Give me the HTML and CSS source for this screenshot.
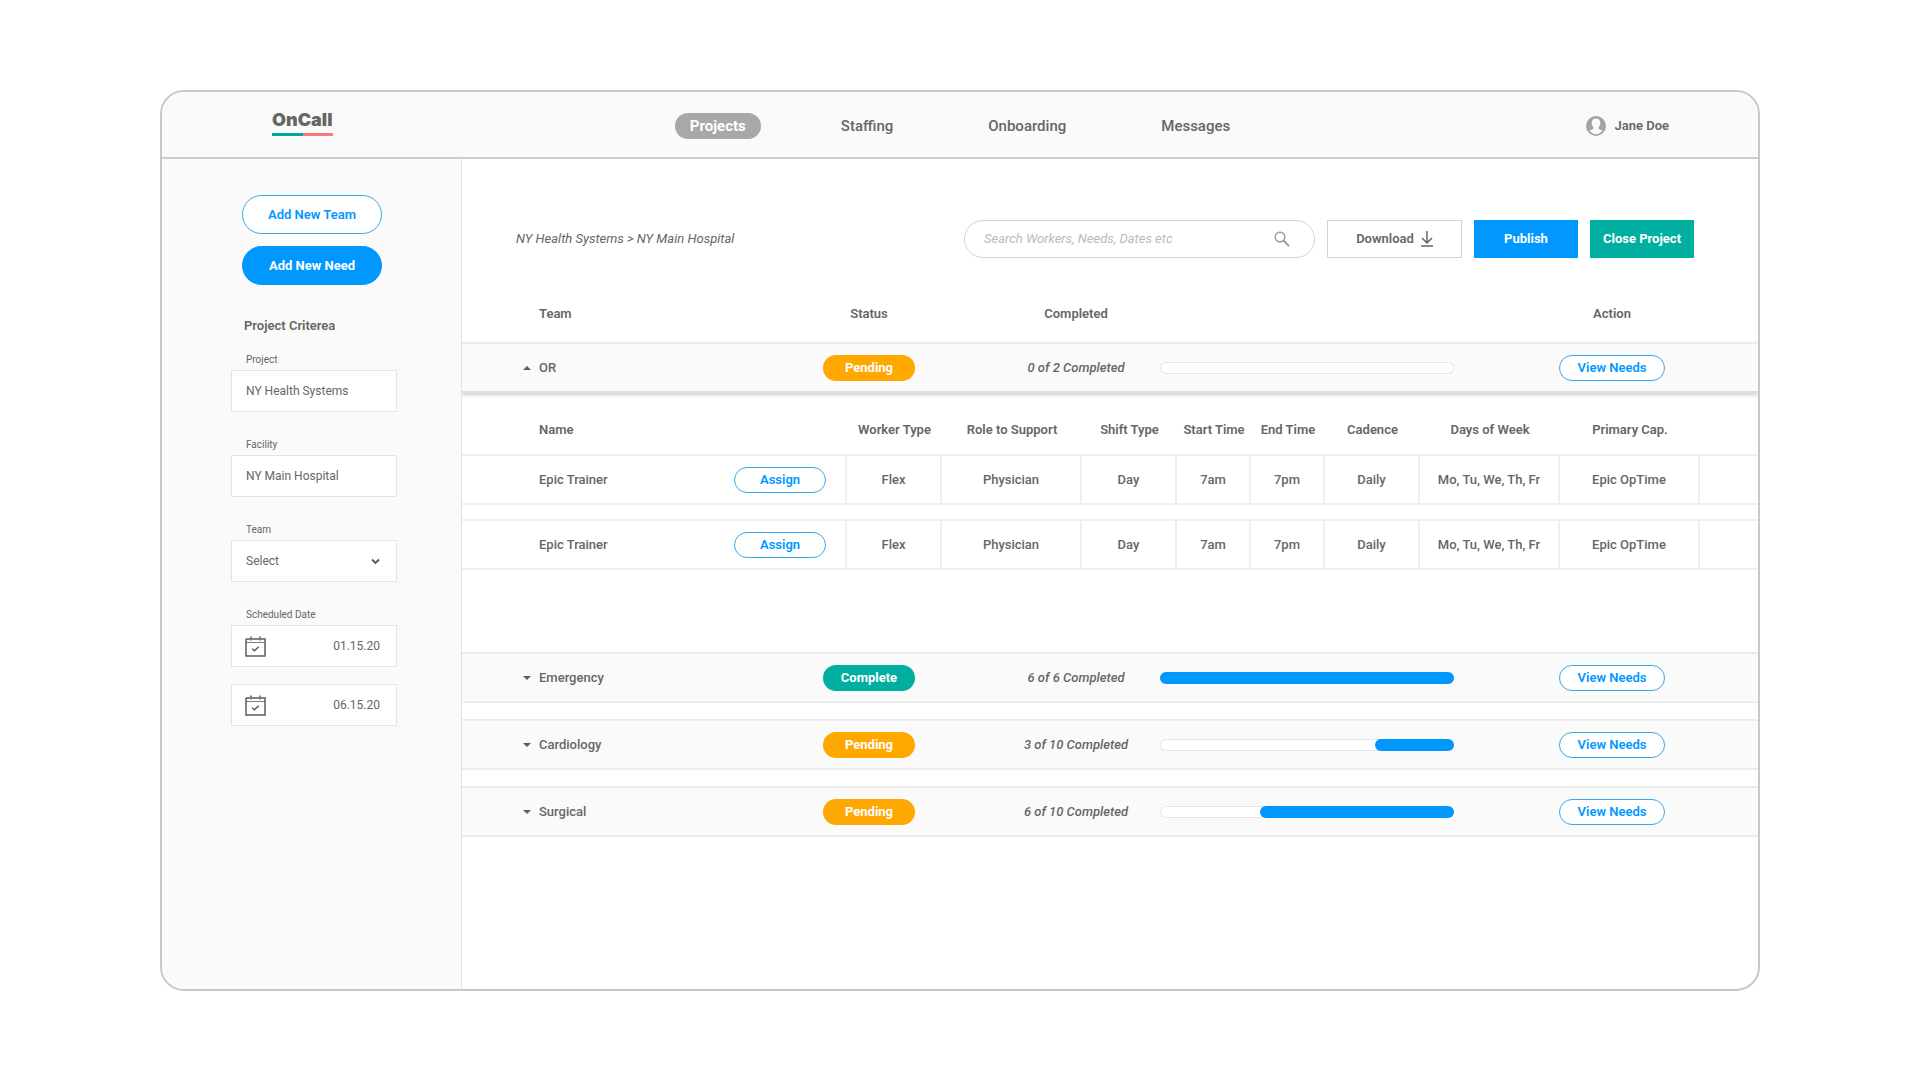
FILE: index.html
```
<!DOCTYPE html>
<html lang="en">
<head>
    <meta charset="UTF-8">
    <meta name="viewport" content="width=device-width, initial-scale=1.0">
    <title>OnCall - Projects</title>
    <link rel="stylesheet" href="styles.css">
</head>
<body>
    <!-- Shared icons -->
    <svg class="sprite" width="0" height="0" aria-hidden="true">
        <symbol id="icon-calendar" viewBox="0 0 21 21">
            <g fill="none" stroke="#5c5c5c">
                <path d="M1 3H5.500M7 3H14M15.500 3H20V20H1V3" stroke-width="1.500"/>
                <path d="M1 6.500H20" stroke-width="0.800"/>
                <path d="M6 0.500V4.500M15 0.500V4.500" stroke-width="1.500"/>
                <path d="M7.200 12.700L9.500 14.800L13.700 10.700" stroke-width="1.500"/>
            </g>
        </symbol>
        <symbol id="icon-down" viewBox="0 0 8 4"><path d="M0 0H8L4 4Z" fill="#5c5c5c"/></symbol>
        <symbol id="icon-up" viewBox="0 0 8 4"><path d="M0 4H8L4 0Z" fill="#5c5c5c"/></symbol>
    </svg>

    <div class="app">
        <header class="topbar">
            <a class="logo" href="#">OnCall</a>
            <nav class="nav">
                <a class="active" href="#">Projects</a>
                <a href="#">Staffing</a>
                <a href="#">Onboarding</a>
                <a href="#">Messages</a>
            </nav>
            <a class="user" href="#">
                <svg width="20" height="20" viewBox="0 0 20 20" aria-hidden="true">
                    <circle cx="10" cy="10" r="10" fill="#a3a3a3"/>
                    <path d="M10 2.600C7.200 2.600 5.600 4.500 5.700 7.200C5.800 9.100 6.500 10.200 7.300 11C7.700 12.600 7.200 13.300 3.400 14.600C5 16.900 7.300 18.300 10 18.300S15 16.900 16.600 14.600C12.800 13.300 12.300 12.600 12.700 11C13.500 10.200 14.200 9.100 14.300 7.200C14.400 4.500 12.800 2.600 10 2.600Z" fill="#fafafa"/>
                </svg>
                Jane Doe
            </a>
        </header>

        <div class="body">
            <aside class="sidebar">
                <div class="sidebar-actions">
                    <button class="btn-round">Add New Team</button>
                    <button class="btn-round filled">Add New Need</button>
                </div>

                <h2>Project Criterea</h2>

                <div class="field">
                    <label for="project">Project</label>
                    <div class="box"><input type="text" id="project" value="NY Health Systems"></div>
                </div>
                <div class="field">
                    <label for="facility">Facility</label>
                    <div class="box"><input type="text" id="facility" value="NY Main Hospital"></div>
                </div>
                <div class="field">
                    <label for="team">Team</label>
                    <div class="box">
                        <select id="team">
                            <option>Select</option>
                            <option>OR</option>
                            <option>Emergency</option>
                            <option>Cardiology</option>
                            <option>Surgical</option>
                        </select>
                        <svg width="9" height="7" viewBox="0 0 9 7" aria-hidden="true"><path d="M1 1.500L4.500 5L8 1.500" fill="none" stroke="#555" stroke-width="1.800"/></svg>
                    </div>
                </div>
                <div class="field">
                    <label for="dateFrom">Scheduled Date</label>
                    <div class="box date">
                        <svg width="21" height="21" aria-hidden="true"><use href="#icon-calendar"/></svg>
                        <input type="text" id="dateFrom" value="01.15.20">
                    </div>
                    <div class="box date">
                        <svg width="21" height="21" aria-hidden="true"><use href="#icon-calendar"/></svg>
                        <input type="text" id="dateTo" value="06.15.20" aria-label="Scheduled end date">
                    </div>
                </div>
            </aside>

            <main class="main">
                <div class="toolbar">
                    <div class="breadcrumb">NY Health Systems &gt; NY Main Hospital</div>
                    <div class="search">
                        <input type="text" placeholder="Search Workers, Needs, Dates etc" aria-label="Search">
                        <svg width="16" height="16" viewBox="0 0 16 16" aria-hidden="true"><circle cx="6" cy="6" r="4.800" fill="none" stroke="#999" stroke-width="1.500"/><path d="M9.500 9.500L15 15" stroke="#999" stroke-width="1.800"/></svg>
                    </div>
                    <button class="btn download">
                        Download
                        <svg width="12" height="16" viewBox="0 0 12 16" aria-hidden="true"><path d="M6 0V12M1 7L6 12L11 7M0 15H12" fill="none" stroke="#666" stroke-width="1.500"/></svg>
                    </button>
                    <button class="btn publish">Publish</button>
                    <button class="btn close">Close Project</button>
                </div>

                <table class="teams">
                    <colgroup>
                        <col class="col-team">
                        <col class="col-status">
                        <col class="col-completed">
                        <col>
                        <col class="col-action">
                    </colgroup>
                    <thead>
                        <tr>
                            <th class="first">Team</th>
                            <th>Status</th>
                            <th>Completed</th>
                            <th></th>
                            <th>Action</th>
                        </tr>
                    </thead>
                    <tbody>
                        <tr class="team open">
                            <td class="first"><button class="toggle"><svg width="8" height="4" aria-hidden="true"><use href="#icon-up"/></svg>OR</button></td>
                            <td><span class="status">Pending</span></td>
                            <td class="count">0 of 2 Completed</td>
                            <td><div class="bar"></div></td>
                            <td><button class="pill view">View Needs</button></td>
                        </tr>
                        <tr>
                            <td class="nested" colspan="5">
                                <table class="workers">
                                    <colgroup>
                                        <col>
                                        <col class="col-m">
                                        <col class="col-l">
                                        <col class="col-m">
                                        <col class="col-s">
                                        <col class="col-s">
                                        <col class="col-m">
                                        <col class="col-l">
                                        <col class="col-l">
                                        <col class="col-end">
                                    </colgroup>
                                    <thead>
                                        <tr>
                                            <th class="first">Name</th>
                                            <th>Worker Type</th>
                                            <th>Role to Support</th>
                                            <th>Shift Type</th>
                                            <th>Start Time</th>
                                            <th>End Time</th>
                                            <th>Cadence</th>
                                            <th>Days of Week</th>
                                            <th>Primary Cap.</th>
                                            <th></th>
                                        </tr>
                                    </thead>
                                    <tbody>
                                        <tr class="worker">
                                            <td class="first"><div class="name">Epic Trainer <button class="pill">Assign</button></div></td>
                                            <td>Flex</td>
                                            <td>Physician</td>
                                            <td>Day</td>
                                            <td>7am</td>
                                            <td>7pm</td>
                                            <td>Daily</td>
                                            <td>Mo, Tu, We, Th, Fr</td>
                                            <td>Epic OpTime</td>
                                            <td></td>
                                        </tr>
                                        <tr class="spacer"><td colspan="10"></td></tr>
                                        <tr class="worker">
                                            <td class="first"><div class="name">Epic Trainer <button class="pill">Assign</button></div></td>
                                            <td>Flex</td>
                                            <td>Physician</td>
                                            <td>Day</td>
                                            <td>7am</td>
                                            <td>7pm</td>
                                            <td>Daily</td>
                                            <td>Mo, Tu, We, Th, Fr</td>
                                            <td>Epic OpTime</td>
                                            <td></td>
                                        </tr>
                                    </tbody>
                                </table>
                            </td>
                        </tr>
                        <tr class="team">
                            <td class="first"><button class="toggle"><svg width="8" height="4" aria-hidden="true"><use href="#icon-down"/></svg>Emergency</button></td>
                            <td><span class="status complete">Complete</span></td>
                            <td class="count">6 of 6 Completed</td>
                            <td><div class="bar"><div class="fill" style="width: 100%"></div></div></td>
                            <td><button class="pill view">View Needs</button></td>
                        </tr>
                        <tr class="spacer team-spacer"><td colspan="5"></td></tr>
                        <tr class="team">
                            <td class="first"><button class="toggle"><svg width="8" height="4" aria-hidden="true"><use href="#icon-down"/></svg>Cardiology</button></td>
                            <td><span class="status">Pending</span></td>
                            <td class="count">3 of 10 Completed</td>
                            <td><div class="bar"><div class="fill" style="width: 27%"></div></div></td>
                            <td><button class="pill view">View Needs</button></td>
                        </tr>
                        <tr class="spacer team-spacer"><td colspan="5"></td></tr>
                        <tr class="team">
                            <td class="first"><button class="toggle"><svg width="8" height="4" aria-hidden="true"><use href="#icon-down"/></svg>Surgical</button></td>
                            <td><span class="status">Pending</span></td>
                            <td class="count">6 of 10 Completed</td>
                            <td><div class="bar"><div class="fill" style="width: 66%"></div></div></td>
                            <td><button class="pill view">View Needs</button></td>
                        </tr>
                    </tbody>
                </table>
            </main>
        </div>
    </div>
</body>
</html>
```
FILE: styles.css
```
* { box-sizing: border-box; }
body {
    margin: 0;
    min-height: 100vh;
    padding: 90px 160px 89px;
    display: flex;
    background-color: #fff;
    color: #666;
    font-family: Roboto, "Liberation Sans", sans-serif;
    font-size: 13px;
    font-weight: 500;
    line-height: 20px;
}
a { color: inherit; text-decoration: none; }
button, input, select { font: inherit; color: inherit; }
button { cursor: pointer; padding: 0; }
.sprite { position: absolute; }

.app {
    flex: 1;
    min-width: 0;
    display: flex;
    flex-direction: column;
    border: 2px solid #c8c8c8;
    border-radius: 24px;
    overflow: hidden;
}

/* Top bar */
.topbar {
    display: grid;
    grid-template-columns: 1fr auto 1fr;
    align-items: center;
    padding: 18px 89px 15px;
    background-color: #fafafa;
    border-bottom: 2px solid #cdcdcd;
}
.logo {
    justify-self: start;
    margin: 0 0 6px 21px;
    font-family: Inter, sans-serif;
    font-size: 18px;
    font-weight: 900;
    line-height: 20px;
    padding-bottom: 3px;
    border-bottom: 3px solid;
    border-image: linear-gradient(to right, #00a99b 50%, #f47c7c 50%) 1;
}
.nav { display: flex; gap: 65px; font-size: 15px; }
.nav a { padding: 3px 15px; border-radius: 13px; }
.nav .active { background-color: #a8a8a8; color: #fff; font-weight: 700; }
.user { justify-self: end; display: flex; align-items: center; gap: 8px; font-weight: 600; }

.body { flex: 1; display: flex; }

/* Sidebar */
.sidebar {
    flex: none;
    width: 300px;
    padding: 36px 64px 36px 69px;
    background-color: #fafafa;
    border-right: 1px solid #e2e2e2;
}
.sidebar-actions { display: flex; flex-direction: column; gap: 12px; width: 140px; margin-left: 11px; }
.btn-round {
    height: 39px;
    border: 1px solid #3ba7e8;
    border-radius: 20px;
    background-color: #fff;
    color: #0098ff;
    font-weight: 600;
}
.btn-round.filled { background-color: #0098ff; border-color: #0098ff; color: #fff; font-weight: 700; }
.sidebar h2 { margin: 31px 0 14px 13px; font-size: 13px; font-weight: 600; line-height: 20px; }
.field { margin-bottom: 23px; font-weight: 400; }
.field label { display: block; padding-left: 15px; font-size: 10px; }
.box {
    display: flex;
    align-items: center;
    height: 42px;
    padding: 0 16px 0 14px;
    background-color: #fff;
    border: 1px solid #e4e4e4;
    font-size: 12px;
}
.box input, .box select {
    flex: 1;
    min-width: 0;
    padding: 0;
    border: 0;
    background: none;
    outline: none;
    appearance: none;
}
.date { padding-left: 13px; }
.date + .date { margin-top: 17px; }
.date input { text-align: right; }

/* Toolbar */
.main { flex: 1; min-width: 0; padding-top: 61px; overflow: hidden; }
.toolbar { display: flex; align-items: center; gap: 12px; padding: 0 64px 0 54px; margin-bottom: 28px; }
.breadcrumb { flex: 1; font-style: italic; font-weight: 400; }
.search {
    display: flex;
    align-items: center;
    width: 351px;
    height: 38px;
    padding: 0 24px 0 19px;
    border: 1px solid #d4d4d4;
    border-radius: 19px;
}
.search input { flex: 1; min-width: 0; padding: 0; border: 0; outline: none; background: none; font-style: italic; font-weight: 400; }
.search input::placeholder { color: #bbb; opacity: 1; }
.btn { width: 104px; height: 38px; border: 0; color: #fff; font-weight: 700; }
.btn.download {
    display: flex;
    align-items: center;
    justify-content: center;
    gap: 7px;
    width: 135px;
    border: 1px solid #d4d4d4;
    background-color: #fff;
    color: #666;
    font-weight: 600;
}
.btn.publish { background-color: #0098ff; }
.btn.close { background-color: #00af9f; }

/* Teams table */
table { width: 100%; table-layout: fixed; border-collapse: separate; border-spacing: 0; }
th, td { padding: 0; text-align: center; font-weight: 500; white-space: nowrap; }
th { font-weight: 600; }
th.first, td.first { text-align: left; padding-left: 77px; }
.col-team { width: 284px; }
.col-status { width: 246px; }
.col-completed { width: 168px; }
.col-action { width: 292px; }
.teams > thead th { height: 56px; }
.team > td {
    height: 51px;
    background-color: #fafafa;
    border-top: 2px solid #ececec;
    border-bottom: 2px solid #ececec;
}
.team > td.first { padding-left: 61px; }
.team.open { box-shadow: 0 2px 4px rgba(0,0,0,0.2); }
.team.open > td { border-bottom-color: #dedede; }
.toggle { display: flex; align-items: center; gap: 8px; border: 0; background: none; }
.status {
    display: block;
    width: 92px;
    margin: 0 auto;
    border-radius: 13px;
    line-height: 26px;
    background-color: #ffa800;
    color: #fff;
    font-weight: 700;
}
.status.complete { background-color: #00af9f; }
.count { font-style: italic; }
.bar {
    display: flex;
    justify-content: flex-end;
    height: 12px;
    margin-right: 12px;
    border-radius: 6px;
    background-color: #fff;
    box-shadow: inset 0 0 0 1px #e6e6e6;
}
.fill { border-radius: 6px; background-color: #0098ff; }
.pill {
    width: 92px;
    height: 26px;
    border: 1px solid #3ba7e8;
    border-radius: 13px;
    background-color: #fff;
    color: #0098ff;
    font-weight: 600;
}
.pill.view { width: 106px; }
.spacer td { height: 14px; }
.team-spacer td { height: 16px; }

/* Workers of an open team */
.nested { padding-bottom: 82px; }
.col-s { width: 74px; }
.col-m { width: 95px; }
.col-l { width: 140px; }
.col-end { width: 58px; }
.workers th { height: 61px; padding-top: 12px; }
.worker td {
    height: 51px;
    border: 2px solid #efefef;
    border-width: 2px 2px 2px 0;
}
.worker td:last-child { border-right: 0; }
.name { display: flex; align-items: center; justify-content: space-between; padding-right: 19px; }
```
